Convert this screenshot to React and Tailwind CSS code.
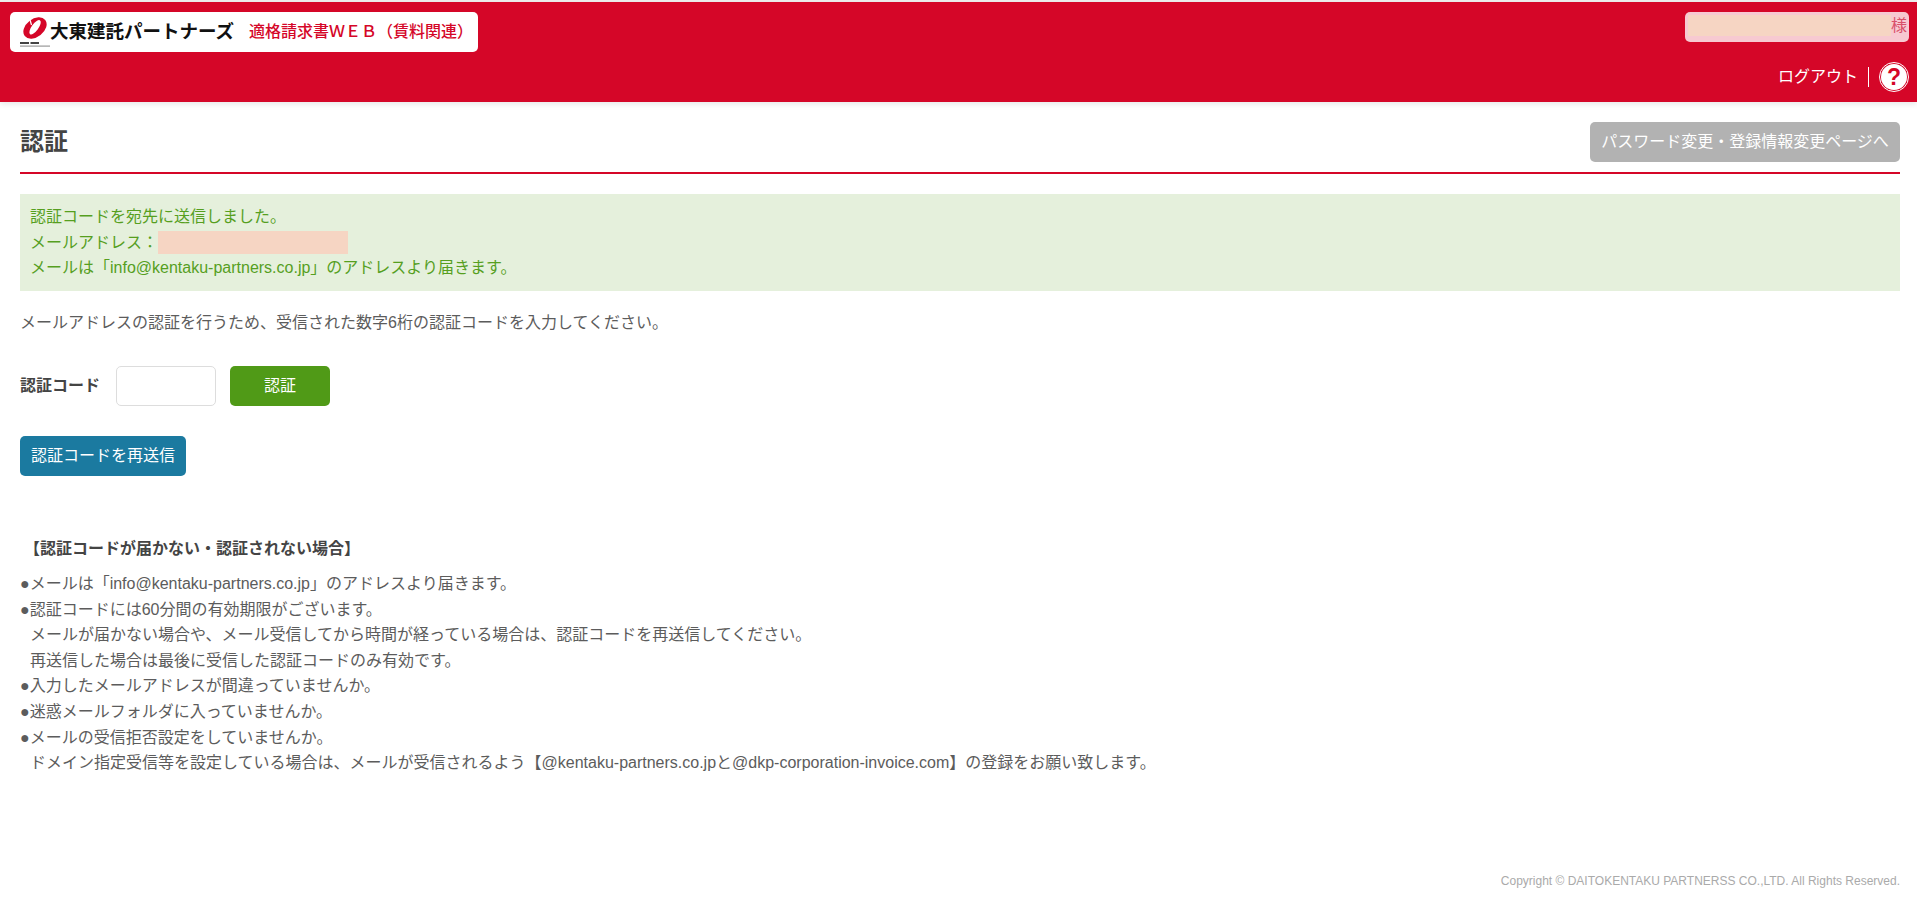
const sans = "font-['Liberation_Sans','Noto_Sans_CJK_JP',sans-serif]";

function LogoMark() {
  return (
    <svg width="30" height="32" viewBox="0 0 30 32" className="shrink-0">
      <g transform="rotate(-38 15 12)">
        <ellipse cx="15" cy="12" rx="13" ry="9" fill="#d50628" />
        <ellipse cx="15.500" cy="11.500" rx="8.500" ry="3.400" fill="#fff" transform="rotate(-16 15.500 11.500)" />
      </g>
      <path d="M11.500 9L9.500 2" stroke="#fff" strokeWidth="1.200" fill="none" />
      <rect x="0" y="26" width="9" height="2" fill="#444" />
      <rect x="10.500" y="26" width="8.500" height="2" fill="#444" />
      <rect x="0" y="29.500" width="30" height="1.200" fill="#999" />
    </svg>
  );
}

function HelpIcon() {
  return (
    <div className="w-[30px] h-[30px] rounded-full border border-white flex items-center justify-center">
      <div className={`w-[26px] h-[26px] rounded-full bg-white flex items-center justify-center text-[#d50628] text-[23px] font-bold leading-none ${sans}`}>?</div>
    </div>
  );
}

const lines = [
  { t: "●メールは「info@kentaku-partners.co.jp」のアドレスより届きます。" },
  { t: "●認証コードには60分間の有効期限がございます。" },
  { t: "メールが届かない場合や、メール受信してから時間が経っている場合は、認証コードを再送信してください。", i: true },
  { t: "再送信した場合は最後に受信した認証コードのみ有効です。", i: true },
  { t: "●入力したメールアドレスが間違っていませんか。" },
  { t: "●迷惑メールフォルダに入っていませんか。" },
  { t: "●メールの受信拒否設定をしていませんか。" },
  { t: "ドメイン指定受信等を設定している場合は、メールが受信されるよう【@kentaku-partners.co.jpと@dkp-corporation-invoice.com】の登録をお願い致します。", i: true },
];

export default function App() {
  return (
    <div className={`min-h-screen flex flex-col bg-white text-[#5c5c5c] text-[16px] ${sans}`}>
      <div className="h-[2px] bg-[#f0eeee]" />
      <header className="h-[100px] bg-[#d50628] px-[8px] pt-[10px] shadow-[0_2px_6px_rgba(0,0,0,0.1)] flex justify-between">
        <div className="ml-[2px] w-[468px] h-[40px] bg-white rounded-[5px] flex items-center pl-[10px]">
          <LogoMark />
          <span className="w-[199px] text-[18.500px] font-bold text-[#111] whitespace-nowrap">大東建託パートナーズ</span>
          <span className="font-medium text-[#d50628] whitespace-nowrap">適格請求書ＷＥＢ（賃料関連）</span>
        </div>
        <div className="w-[224px] flex flex-col items-end">
          <div className="w-full h-[30px] rounded-[5px] bg-[#f7c9d1] pl-[3px] pt-[3px] flex text-[#d9506a]">
            <div className="w-[203px] h-[21px] bg-[#f6d5c3]" />
            <span className="leading-[21px]">様</span>
          </div>
          <div className="mt-[20px] flex items-center text-white">
            <span>ログアウト</span>
            <div className="w-px h-[20px] bg-white mx-[10px]" />
            <HelpIcon />
          </div>
        </div>
      </header>

      <main className="pl-[20px] pr-[17px] flex-1 flex flex-col">
        <div className="mt-[20px] h-[52px] border-b-2 border-[#d50628] flex justify-between items-start">
          <h1 className="text-[24px] leading-[40px] font-bold text-[#444]">認証</h1>
          <button className="h-[40px] w-[310px] rounded-[5px] bg-[#b2b2b2] text-white whitespace-nowrap">パスワード変更・登録情報変更ページへ</button>
        </div>

        <div className="mt-[20px] h-[97px] bg-[#e5f0dc] text-[#569f1f] px-[10px] py-[10px] leading-[25.500px]">
          <p>認証コードを宛先に送信しました。</p>
          <p className="flex items-center">メールアドレス：<span className="w-[190px] h-[23px] bg-[#f6d5c3]" /></p>
          <p>メールは「info@kentaku-partners.co.jp」のアドレスより届きます。</p>
        </div>

        <p className="mt-[19px] leading-[25.500px]">メールアドレスの認証を行うため、受信された数字6桁の認証コードを入力してください。</p>

        <div className="mt-[30px] flex items-center">
          <label className="w-[96px] font-bold text-[#444]">認証コード</label>
          <input className="w-[100px] h-[40px] rounded-[5px] border border-[#ddd] bg-white" />
          <button className="ml-[14px] w-[100px] h-[40px] rounded-[5px] bg-[#509a17] text-white">認証</button>
        </div>

        <button className="mt-[30px] w-[166px] h-[40px] rounded-[5px] bg-[#1b7aa0] text-white whitespace-nowrap">認証コードを再送信</button>

        <h2 className="mt-[60px] pl-[4px] font-bold text-[#444] leading-[25.500px]">【認証コードが届かない・認証されない場合】</h2>

        <ul className="mt-[10px] leading-[25.600px]">
          {lines.map((l) => (
            <li key={l.t} className={l.i ? "whitespace-nowrap pl-[10px]" : "whitespace-nowrap"}>{l.t}</li>
          ))}
        </ul>

        <footer className="mt-auto pb-[22px] text-right text-[12px] text-[#aaa]">Copyright © DAITOKENTAKU PARTNERSS CO.,LTD. All Rights Reserved.</footer>
      </main>
    </div>
  );
}
